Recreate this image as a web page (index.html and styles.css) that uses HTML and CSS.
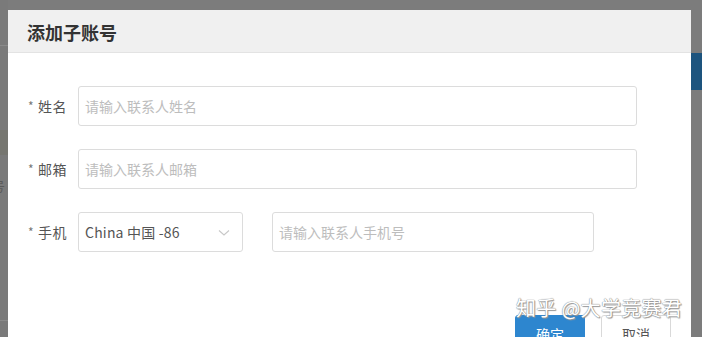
FILE: index.html
```html
<!DOCTYPE html>
<html lang="zh">
<head>
<meta charset="utf-8">
<link rel="stylesheet" href="styles.css">
</head>
<body>
<div class="page">
  <div class="page-left">
    <div class="pl-line pl-line-top"></div>
    <div class="pl-dark"></div>
    <div class="pl-text">号</div>
    <div class="pl-line pl-line-bottom"></div>
  </div>
  <div class="page-right">
    <div class="pr-blue"></div>
  </div>
</div>

<div class="dialog">
  <div class="dialog-header">添加子账号</div>
  <div class="dialog-body">
    <div class="form-row">
      <label class="form-label"><span class="star">*</span>姓名</label>
      <div class="input input-wide"><span class="ph">请输入联系人姓名</span></div>
    </div>
    <div class="form-row">
      <label class="form-label"><span class="star">*</span>邮箱</label>
      <div class="input input-wide"><span class="ph">请输入联系人邮箱</span></div>
    </div>
    <div class="form-row">
      <label class="form-label"><span class="star">*</span>手机</label>
      <div class="input select">
        <span class="sel-value">China 中国 -86</span>
        <svg class="chev" width="12" height="8" viewBox="0 0 12 8"><path d="M1 1.5 L6 6 L11 1.5" fill="none" stroke="#c8c8c8" stroke-width="1.1"/></svg>
      </div>
      <div class="input input-phone"><span class="ph">请输入联系人手机号</span></div>
    </div>
    <div class="footer">
      <button class="btn btn-primary">确定</button>
      <button class="btn btn-default">取消</button>
    </div>
  </div>
  <div class="watermark">知乎 @大学竞赛君</div>
</div>
</body>
</html>
```
FILE: styles.css
```css
html, body {
  margin: 0;
  padding: 0;
}
body {
  width: 702px;
  height: 337px;
  overflow: hidden;
  background: #7c7c7c;
  font-family: "Noto Sans CJK SC", "Noto Sans", sans-serif;
  position: relative;
}
.page {
  display: flex;
  justify-content: space-between;
  height: 337px;
}
.page-left {
  width: 8px;
  position: relative;
  background: #7a7a7a;
}
.pl-line {
  position: absolute;
  left: 0;
  right: 0;
  height: 1px;
  background: #8a8a8a;
}
.pl-line-top { top: 45px; }
.pl-line-bottom { top: 320px; }
.pl-dark {
  position: absolute;
  left: 0;
  right: 0;
  top: 130px;
  height: 25px;
  background: #767670;
}
.pl-text {
  position: absolute;
  left: -8px;
  top: 176px;
  font-size: 13px;
  color: #5a5a5a;
}
.page-right {
  width: 11px;
  background: #7c7c7c;
  padding-top: 53px;
}
.pr-blue {
  height: 37px;
  background: #1d547e;
}

.dialog {
  position: absolute;
  left: 8px;
  top: 10px;
  width: 683px;
  height: 340px;
  background: #ffffff;
}
.dialog-header {
  height: 42px;
  background: #f0f0f0;
  border-bottom: 1px solid #e3e3e3;
  padding-left: 19px;
  font-size: 18px;
  font-weight: bold;
  color: #333333;
  line-height: 44px;
}
.dialog-body {
  padding: 33px 20px 0 20px;
  display: flex;
  flex-direction: column;
  gap: 23px;
}
.form-row {
  display: flex;
  align-items: center;
  height: 40px;
}
.form-label {
  width: 50px;
  font-size: 14px;
  color: #555555;
  display: flex;
  align-items: center;
  letter-spacing: 0.5px;
}
.star {
  color: #777777;
  font-size: 12px;
  margin-right: 4px;
  position: relative;
  top: -1px;
}
.input {
  box-sizing: border-box;
  height: 40px;
  border: 1px solid #dcdcdc;
  border-radius: 3px;
  display: flex;
  align-items: center;
  padding-left: 6px;
  background: #fff;
}
.input-wide { width: 559px; }
.select {
  width: 165px;
  justify-content: space-between;
  padding-right: 12px;
}
.input-phone {
  width: 322px;
  margin-left: 29px;
}
.ph {
  font-size: 14px;
  color: #bdbdbd;
}
.sel-value {
  font-size: 14px;
  color: #555555;
  letter-spacing: 0.2px;
}
.chev { margin-top: 1px; }
.footer {
  display: flex;
  justify-content: flex-end;
  gap: 16px;
  margin-top: 40px;
}
.btn {
  width: 70px;
  height: 36px;
  border-radius: 3px;
  font-family: inherit;
  font-size: 14px;
  padding: 0;
  line-height: 36px;
}
.btn-primary {
  background: #2d86cf;
  border: 1px solid #2d86cf;
  color: #ffffff;
}
.btn-default {
  background: #ffffff;
  border: 1px solid #d9d9d9;
  color: #555555;
}
.watermark {
  position: absolute;
  left: 508px;
  top: 283px;
  font-size: 20px;
  color: #ffffff;
  letter-spacing: 0.3px;
  text-shadow: 0 0 1px #8a8a8a, 0 0 1px #8a8a8a, 1px 1px 1px #9a9a9a;
}
```
